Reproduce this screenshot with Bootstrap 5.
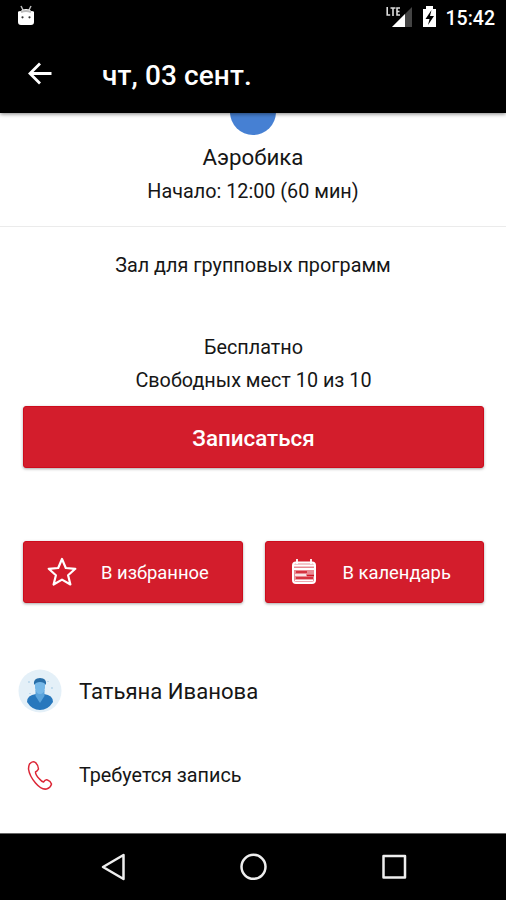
<!DOCTYPE html>
<html lang="ru">
<head>
<meta charset="utf-8">
<meta name="viewport" content="width=device-width, initial-scale=1">
<title>чт, 03 сент.</title>
<link href="https://cdn.jsdelivr.net/npm/bootstrap@5.3.0/dist/css/bootstrap.min.css" rel="stylesheet">
<style>
body{font-family:Roboto,"Liberation Sans",sans-serif;font-size:19.8px;line-height:32px;color:#161616;height:900px;overflow:hidden}
svg{display:block;flex:none}
.status{height:36px;padding:0 11px 0 17px}
.clock{font-size:19.5px;font-weight:500;line-height:37px;margin-left:9px}
.topbar{height:77px;padding:0 27px 3px;box-shadow:0 1px 4px rgba(0,0,0,.5)}
.topbar h1{font-size:28px;font-weight:500;margin-left:48px;padding-top:5px;letter-spacing:.1px}
.disc{width:46px;height:46px;margin-top:-24px;background:#4680d3}
.lesson{height:114px;border-bottom:1px solid #ebebeb}
.lesson h2{font-size:22.3px;line-height:34px;margin:5px 0 2px}
.room{padding-top:23px;height:105px}
.booking{padding:0 22px 0 23px}
.seats{padding-top:1px}
.btn-red{--bs-btn-color:#fff;--bs-btn-bg:#d31d2c;--bs-btn-border-color:#cd0c1c;--bs-btn-hover-color:#fff;--bs-btn-hover-bg:#c01625;--bs-btn-hover-border-color:#c01625;--bs-btn-border-radius:3px;--bs-btn-padding-y:0;height:62px;box-shadow:0 1px 3px rgba(0,0,0,.35)}
.main-action{font-size:22.4px;font-weight:500;margin-top:9px;padding-top:3px}
.pair{gap:22px;margin-top:73px}
.pair .btn{font-size:18.4px;padding:2px 0 0 22px;text-align:left}
.pair svg{margin-right:23px}
.details{padding-top:45px}
.info{height:85px;padding-left:18px}
.info svg{margin-right:17px}
.trainer{font-size:22.1px}
.navkeys{height:67px;border-top:1px solid #666}
</style>
<script src="https://cdn.jsdelivr.net/npm/bootstrap@5.3.0/dist/js/bootstrap.bundle.min.js"></script>
</head>
<body class="d-flex flex-column bg-white">
<header class="bg-black text-white position-relative z-3">
  <div class="status d-flex align-items-start">
    <svg width="18" height="30" viewBox="0 0 18 30"><path d="M4 6l2 4M14 6l-2 4" stroke="#bbb" stroke-width="1.5"/><path d="M1 12q0-1 3-1 1-2 5-2t5 2q3 0 3 1v10q0 3-3 3H4q-3 0-3-3z" fill="#fff"/><path d="M4 12q5-2 10 0" stroke="#bbb" stroke-width="2" fill="none"/><circle cx="5.500" cy="17.300" r="1.100" fill="#333"/><circle cx="12.500" cy="17.300" r="1.100" fill="#333"/></svg>
    <div class="d-flex ms-auto">
      <svg width="28" height="30" viewBox="0 0 28 30"><path d="M6 27L26 7v20z" fill="#444"/><path d="M6 27l13-13v13z" fill="#fff"/><path d="M0 5h14v10l-4 3H0z" fill="#000"/><path d="M1.200 7v8h3M4.500 8h5M7 8v8M14 8h-3v7h3M11 11.500h2.500" stroke="#ddd" stroke-width="1.600" fill="none"/></svg>
      <svg width="15" height="30" viewBox="0 0 15 30" class="ms-2"><path d="M1 9h3V6h7v3h3v18H1z" fill="#fff"/><path d="M9.500 10L3.500 19h4l-1.500 6 6-9H8z" fill="#000"/></svg>
      <span class="clock">15:42</span>
    </div>
  </div>
  <div class="topbar bg-black d-flex align-items-center">
    <svg width="27" height="27" viewBox="0 0 27 27" fill="none" stroke="#fff" stroke-width="2.800"><path d="M24.500 13.500H3.500M13 3.500l-10 10 10 10"/></svg>
    <h1 class="mb-0">чт, 03 сент.</h1>
  </div>
</header>
<main class="flex-grow-1 text-center overflow-hidden">
  <section class="lesson overflow-hidden">
    <div class="disc rounded-circle mx-auto"></div>
    <h2 class="fw-normal">Аэробика</h2>
    <div>Начало: 12:00 (60 мин)</div>
  </section>
  <section class="room">Зал для групповых программ</section>
  <section class="booking">
    <div>Бесплатно</div>
    <div class="seats">Свободных мест 10 из 10</div>
    <button type="button" class="btn btn-red main-action w-100">Записаться</button>
    <div class="pair d-flex">
      <button type="button" class="btn btn-red d-flex align-items-center w-50">
        <svg width="32" height="32" viewBox="0 0 32 32" fill="none" stroke="#fff" stroke-width="2.200" stroke-linejoin="round"><path d="M16 2l3.800 9 9.500.8-7.200 6.400 2.300 9.300L16 22.600l-8.400 4.900 2.300-9.300-7.200-6.400 9.500-.8z"/></svg>
        <span>В избранное</span>
      </button>
      <button type="button" class="btn btn-red d-flex align-items-center w-50">
        <svg width="32" height="32" viewBox="0 0 32 32" fill="none"><rect x="5" y="5.500" width="22" height="20.500" rx="3" fill="#e98a93" stroke="#fff" stroke-width="2"/><path d="M9 2v5M23 2v5M6 8.500h20M6 12h20" stroke="#fff" stroke-width="1.800"/><path d="M8 15h11M19 18.500h7M8 21h17" stroke="#cf1726" stroke-width="1.700"/><path d="M7 18h11M7 23.500h18" stroke="#fff" stroke-width="1.300"/></svg>
        <span>В календарь</span>
      </button>
    </div>
  </section>
  <section class="details text-start">
    <div class="info d-flex align-items-center trainer">
      <svg width="44" height="44" viewBox="0 0 44 44"><circle cx="22" cy="22" r="21.500" fill="#e4f0f8"/><path d="M9 33q0-7 9-8l4 2 4-2q9 1 9 8-5 8-13 8T9 33z" fill="#2878bd"/><path d="M17.500 21h9v6L22 34l-4.500-7z" fill="#5ba4dc"/><path d="M17 13q0-3 5-3t5 3v6q-1 6-5 6t-5-6z" fill="#76b8e8"/><path d="M16 16q-1-7 6-7t6 7q-2-3-6-3t-6 3z" fill="#286ea8"/><path d="M11 12v2M34 18v2M12 24v1M30 12v1" stroke="#9fc7e3"/></svg>
      <span>Татьяна Иванова</span>
    </div>
    <div class="info d-flex align-items-center">
      <svg width="44" height="44" viewBox="0 0 44 44" fill="none" stroke="#dc2636" stroke-width="1.500" stroke-linejoin="round"><path d="M11.500 10q3-3.500 6-1.500 3 3 3 6.500-1 2-3 3 0 3 4 7 2 2.500 4 3 2-3 4-2 3 1 4 4-1 4-5 5-5 1-11-6-6-7-7-14 0-3 1-5z"/></svg>
      <span>Требуется запись</span>
    </div>
  </section>
</main>
<footer class="navkeys bg-black">
  <svg width="506" height="66" viewBox="0 0 506 66" fill="none" stroke="#eee" stroke-width="2.500" stroke-linejoin="round"><path d="M123.500 21v24L103 33z"/><circle cx="253.500" cy="32.800" r="12"/><rect x="383.500" y="22" width="21.500" height="21.500"/></svg>
</footer>
</body>
</html>
